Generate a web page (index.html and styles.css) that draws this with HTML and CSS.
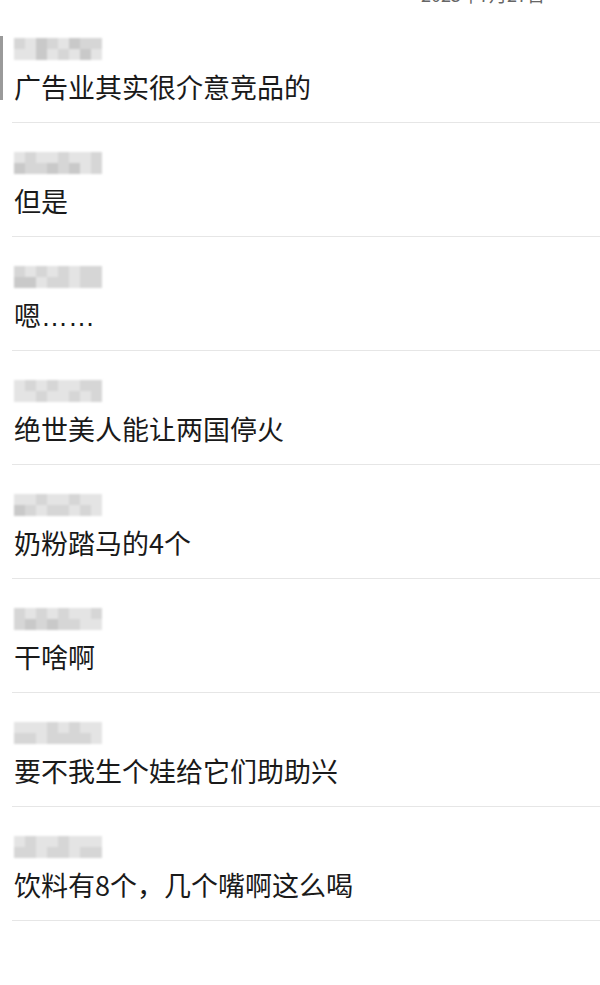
FILE: index.html
```html
<!DOCTYPE html>
<html lang="zh-CN">
<head>
    <meta charset="UTF-8">
    <meta name="viewport" content="width=device-width, initial-scale=1.0">
    <title>评论</title>
    <link rel="stylesheet" href="styles.css">
</head>
<body>

    <div class="date-bar"><span class="date">2023年7月27日</span></div>

    <ul class="comments">
        <li class="comment first">
            <div class="name"><span class="m2"></span><span class="m3"></span><span class="m1"></span><span class="m2"></span><span class="m3"></span><span class="m1"></span><span class="m2"></span><span class="m2"></span><span class="m3"></span><span class="m3"></span><span class="m1"></span><span class="m3"></span><span class="m2"></span><span class="m3"></span><span class="m1"></span><span class="m3"></span></div>
            <p class="text">广告业其实很介意竞品的</p>
        </li>
        <li class="comment">
            <div class="name"><span class="m3"></span><span class="m2"></span><span class="m3"></span><span class="m3"></span><span class="m2"></span><span class="m3"></span><span class="m3"></span><span class="m2"></span><span class="m1"></span><span class="m2"></span><span class="m2"></span><span class="m1"></span><span class="m2"></span><span class="m1"></span><span class="m3"></span><span class="m2"></span></div>
            <p class="text">但是</p>
        </li>
        <li class="comment">
            <div class="name"><span class="m2"></span><span class="m3"></span><span class="m2"></span><span class="m3"></span><span class="m2"></span><span class="m3"></span><span class="m2"></span><span class="m2"></span><span class="m1"></span><span class="m1"></span><span class="m3"></span><span class="m2"></span><span class="m2"></span><span class="m3"></span><span class="m2"></span><span class="m2"></span></div>
            <p class="text">嗯<span class="dots">……</span></p>
        </li>
        <li class="comment">
            <div class="name"><span class="m3"></span><span class="m2"></span><span class="m3"></span><span class="m2"></span><span class="m3"></span><span class="m3"></span><span class="m2"></span><span class="m2"></span><span class="m3"></span><span class="m3"></span><span class="m2"></span><span class="m3"></span><span class="m3"></span><span class="m2"></span><span class="m3"></span><span class="m2"></span></div>
            <p class="text">绝世美人能让两国停火</p>
        </li>
        <li class="comment">
            <div class="name"><span class="m3"></span><span class="m3"></span><span class="m2"></span><span class="m3"></span><span class="m3"></span><span class="m2"></span><span class="m3"></span><span class="m3"></span><span class="m1"></span><span class="m2"></span><span class="m3"></span><span class="m2"></span><span class="m2"></span><span class="m3"></span><span class="m2"></span><span class="m3"></span></div>
            <p class="text">奶粉踏马的4个</p>
        </li>
        <li class="comment">
            <div class="name"><span class="m2"></span><span class="m3"></span><span class="m2"></span><span class="m3"></span><span class="m2"></span><span class="m3"></span><span class="m3"></span><span class="m2"></span><span class="m2"></span><span class="m1"></span><span class="m2"></span><span class="m1"></span><span class="m2"></span><span class="m2"></span><span class="m3"></span><span class="m3"></span></div>
            <p class="text">干啥啊</p>
        </li>
        <li class="comment">
            <div class="name"><span class="m3"></span><span class="m3"></span><span class="m3"></span><span class="m2"></span><span class="m3"></span><span class="m2"></span><span class="m3"></span><span class="m3"></span><span class="m2"></span><span class="m2"></span><span class="m3"></span><span class="m2"></span><span class="m2"></span><span class="m2"></span><span class="m2"></span><span class="m3"></span></div>
            <p class="text">要不我生个娃给它们助助兴</p>
        </li>
        <li class="comment">
            <div class="name"><span class="m3"></span><span class="m2"></span><span class="m3"></span><span class="m3"></span><span class="m2"></span><span class="m3"></span><span class="m3"></span><span class="m3"></span><span class="m2"></span><span class="m2"></span><span class="m3"></span><span class="m2"></span><span class="m2"></span><span class="m3"></span><span class="m2"></span><span class="m2"></span></div>
            <p class="text">饮料有8个，几个嘴啊这么喝</p>
        </li>
    </ul>

</body>
</html>
```

FILE: styles.css
```css
/* Lista de comentarios */
body {
    margin: 0;
    background-color: #fff;
    color: #1a1a1a;
    font-family: "Noto Sans CJK SC", "Noto Sans", sans-serif;
}
.date-bar {
    height: 9px;
    overflow: hidden;
    display: flex;
    justify-content: flex-end;
    align-items: flex-end;
    padding-right: 55px;
}
.date {
    font-size: 18px;
    line-height: 18px;
    color: #666;
    padding-bottom: 6px;
}
.comments {
    list-style: none;
    margin: 0;
    padding: 0 0 0 12px;
}
.comment {
    position: relative;
    padding: 29px 0 18px 2px;
    border-bottom: 1px solid #e6e6e6;
}
.first::before { /* borde del avatar cortado */
    content: "";
    position: absolute;
    left: -12px;
    top: 27px;
    width: 3px;
    height: 64px;
    background-color: #9a9a9a;
    filter: blur(0.6px);
}
.name {
    width: 88px;
    height: 22px;
    display: grid;
    grid-template-columns: repeat(8, 1fr);
    filter: blur(1.2px);
}
.m1 { background-color: #c9c9c9; }
.m2 { background-color: #d6d6d6; }
.m3 { background-color: #e4e4e4; }
.text {
    margin: 10px 0 0 0;
    height: 34px;
    font-size: 27px;
    line-height: 34px;
    white-space: nowrap;
}
.dots { /* puntos sobre la línea base */
    font-family: "Liberation Sans", sans-serif;
}
```
